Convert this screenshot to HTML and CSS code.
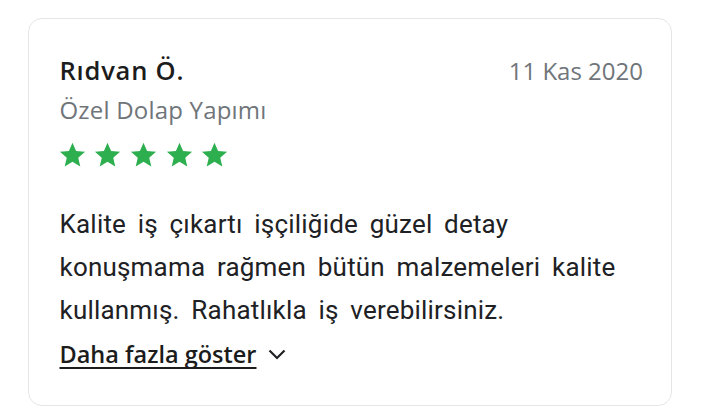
FILE: index.html
```html
<!DOCTYPE html>
<html lang="tr">
<head>
<meta charset="utf-8">
<link rel="stylesheet" href="styles.css">
</head>
<body>
<div class="card">
  <div class="head">
    <div class="name">Rıdvan Ö.</div>
    <div class="date">11 Kas 2020</div>
  </div>
  <div class="service">Özel Dolap Yapımı</div>
  <div class="stars">
    <svg viewBox="0 0 24 24" class="star"><path d="M12 2.2l2.95 6.9 7.45.65-5.65 4.9 1.7 7.3L12 18.1l-6.45 3.85 1.7-7.3-5.65-4.9 7.45-.65z"/></svg>
    <svg viewBox="0 0 24 24" class="star"><path d="M12 2.2l2.95 6.9 7.45.65-5.65 4.9 1.7 7.3L12 18.1l-6.45 3.85 1.7-7.3-5.65-4.9 7.45-.65z"/></svg>
    <svg viewBox="0 0 24 24" class="star"><path d="M12 2.2l2.95 6.9 7.45.65-5.65 4.9 1.7 7.3L12 18.1l-6.45 3.85 1.7-7.3-5.65-4.9 7.45-.65z"/></svg>
    <svg viewBox="0 0 24 24" class="star"><path d="M12 2.2l2.95 6.9 7.45.65-5.65 4.9 1.7 7.3L12 18.1l-6.45 3.85 1.7-7.3-5.65-4.9 7.45-.65z"/></svg>
    <svg viewBox="0 0 24 24" class="star"><path d="M12 2.2l2.95 6.9 7.45.65-5.65 4.9 1.7 7.3L12 18.1l-6.45 3.85 1.7-7.3-5.65-4.9 7.45-.65z"/></svg>
  </div>
  <p class="text">Kalite iş çıkartı işçiliğide güzel detay konuşmama rağmen bütün malzemeleri kalite kullanmış. Rahatlıkla iş verebilirsiniz.</p>
  <div class="more">
    <span class="more-link">Daha fazla göster</span>
    <svg class="chev" viewBox="0 0 24 24"><path d="M4.5 8.5l7.5 7.5 7.5-7.5" fill="none" stroke="#202124" stroke-width="2.2"/></svg>
  </div>
</div>
</body>
</html>
```
FILE: styles.css
```css
html, body { margin: 0; background: #fff; }
body { padding: 18px 30px 0 28px; font-family: Roboto, "Noto Sans", sans-serif; color: #202124; }
.card {
  box-sizing: border-box;
  width: 644px;
  height: 388px;
  border: 1.5px solid #e6e6e6;
  border-radius: 14px;
  padding: 36px 27px 0 30.5px;
}
.head { display: flex; justify-content: space-between; align-items: baseline; }
.name { font-family: "Open Sans", sans-serif; font-size: 25.5px; font-weight: 600; letter-spacing: 0.8px; color: #1c1c1c; line-height: 30px; }
.date { font-family: "Open Sans", sans-serif; font-size: 24px; color: #70757a; line-height: 30px; margin-right: 1px; }
.service { font-family: "Open Sans", sans-serif; font-size: 24px; letter-spacing: 0.2px; color: #70757a; margin-top: 9px; line-height: 30px; }
.stars { display: flex; gap: 6.7px; margin: 15px 0 0 -2px; }
.star { width: 29px; height: 29px; fill: #2eaf4f; }
.text { font-size: 26px; line-height: 43px; letter-spacing: 0.2px; word-spacing: 5px; margin: 34px -3px 0 0; color: #202124; }
.more { display: flex; align-items: center; gap: 9px; margin-top: 7px; }
.more-link { font-family: "Open Sans", sans-serif; font-size: 23.5px; font-weight: 600; line-height: 30px; text-decoration: underline; text-decoration-skip-ink: none; text-underline-offset: 4px; text-decoration-thickness: 1.5px; color: #1c1c1c; }
.chev { width: 24px; height: 24px; }
```
